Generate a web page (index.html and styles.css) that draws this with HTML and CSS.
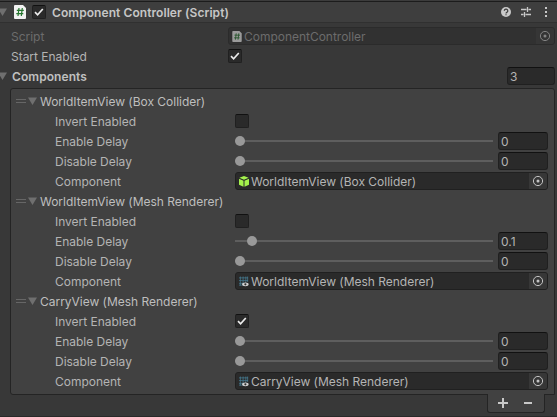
FILE: index.html
```
<!DOCTYPE html>
<html lang="en">
<head>
<meta charset="utf-8">
<title>Component Controller</title>
<link rel="stylesheet" href="styles.css">
</head>
<body>
<svg class="defs" width="0" height="0">
  <symbol id="tri" viewBox="0 0 9 8"><path d="M0 .5h9L4.5 8z" fill="#6f6f6f"/></symbol>
  <symbol id="check" viewBox="0 0 14 14"><path d="M3 7.2l2.6 2.6L10.8 4" fill="none" stroke="#ececec" stroke-width="1.7"/></symbol>
  <symbol id="script" viewBox="0 0 12 14"><path d="M1 0h8l3 3v10a1 1 0 0 1-1 1H1a1 1 0 0 1-1-1V1a1 1 0 0 1 1-1z" fill="#f2f2f2"/><path d="M5 3L4 11M8.3 3l-1 8M2.8 5.3h7M2.3 8.7h7" stroke="#26762f" stroke-width="1.2" fill="none"/></symbol>
  <symbol id="pick" viewBox="0 0 12 12"><circle cx="6" cy="6" r="4.6" fill="none" stroke="#c4c4c4"/><circle cx="6" cy="6" r="1.5" fill="#c4c4c4"/></symbol>
  <symbol id="cube" viewBox="0 0 10 11"><path d="M5 0l4.6 1.8L5 3.8.4 1.8zM0 2.7l4.5 2v6L0 8.7zM10 2.7l-4.500 2v6l4.500-2z" fill="#a4f24c"/></symbol>
  <symbol id="mesh" viewBox="0 0 11 11"><path d="M1.500 0v10M4.500 0v10M7.500 0v7M0 1.500h10M0 4.500h10M0 7.500h5M9.500 0v6M0 9.500h4" stroke="#477f96" stroke-width=".8" fill="none"/><ellipse cx="7" cy="8.600" rx="3.600" ry="2.100" fill="#d0d0d0"/><circle cx="7" cy="8.600" r="1.200" fill="#333"/></symbol>
</svg>
<main class="inspector">
  <header class="head">
    <svg class="tri"><use href="#tri"/></svg>
    <svg class="file"><use href="#script"/></svg>
    <span class="box"><svg><use href="#check"/></svg></span>
    <h1>Component Controller (Script)</h1>
    <svg class="tools" viewBox="0 0 48 12">
      <circle cx="6" cy="6" r="5" fill="#c8c8c8"/>
      <path d="M4.300 4.900a1.750 1.750 0 1 1 2.500 1.500q-.8.400-.8 1M6 8.200v1.100" fill="none" stroke="#3e3e3e" stroke-width="1.200"/>
      <path d="M21 3.500h5.500M28.500 3.500H31M21 8.500h2.500M25.500 8.500H31M27.500 1v5M24.500 6v5" fill="none" stroke="#c8c8c8" stroke-width="1.300"/>
      <path d="M45 1h2v2h-2zM45 5h2v2h-2zM45 9h2v2h-2z" fill="#c8c8c8"/>
    </svg>
  </header>
  <div class="row disabled">
    <span class="label">Script</span>
    <div class="object"><svg class="icon"><use href="#script"/></svg><span class="name">ComponentController</span><span class="picker"><svg><use href="#pick"/></svg></span></div>
  </div>
  <div class="row">
    <span class="label">Start Enabled</span>
    <span class="box"><svg><use href="#check"/></svg></span>
  </div>
  <div class="row fold">
    <svg class="tri"><use href="#tri"/></svg>
    <strong>Components</strong>
    <span class="num">3</span>
  </div>
  <section class="list">
    <div class="item"><i class="grip"></i><svg class="tri"><use href="#tri"/></svg><span class="title">WorldItemView (Box Collider)</span></div>
    <div class="row"><span class="label">Invert Enabled</span><span class="box"></span></div>
    <div class="row"><span class="label">Enable Delay</span><span class="slider"><i class="knob"></i></span><span class="num">0</span></div>
    <div class="row"><span class="label">Disable Delay</span><span class="slider"><i class="knob"></i></span><span class="num">0</span></div>
    <div class="row"><span class="label">Component</span><div class="object"><svg class="icon"><use href="#cube"/></svg><span class="name">WorldItemView (Box Collider)</span><span class="picker"><svg><use href="#pick"/></svg></span></div></div>

    <div class="item"><i class="grip"></i><svg class="tri"><use href="#tri"/></svg><span class="title">WorldItemView (Mesh Renderer)</span></div>
    <div class="row"><span class="label">Invert Enabled</span><span class="box"></span></div>
    <div class="row"><span class="label">Enable Delay</span><span class="slider"><i class="knob tenth"></i></span><span class="num">0.1</span></div>
    <div class="row"><span class="label">Disable Delay</span><span class="slider"><i class="knob"></i></span><span class="num">0</span></div>
    <div class="row"><span class="label">Component</span><div class="object"><svg class="icon"><use href="#mesh"/></svg><span class="name">WorldItemView (Mesh Renderer)</span><span class="picker"><svg><use href="#pick"/></svg></span></div></div>

    <div class="item"><i class="grip"></i><svg class="tri"><use href="#tri"/></svg><span class="title">CarryView (Mesh Renderer)</span></div>
    <div class="row"><span class="label">Invert Enabled</span><span class="box"><svg><use href="#check"/></svg></span></div>
    <div class="row"><span class="label">Enable Delay</span><span class="slider"><i class="knob"></i></span><span class="num">0</span></div>
    <div class="row"><span class="label">Disable Delay</span><span class="slider"><i class="knob"></i></span><span class="num">0</span></div>
    <div class="row"><span class="label">Component</span><div class="object"><svg class="icon"><use href="#mesh"/></svg><span class="name">CarryView (Mesh Renderer)</span><span class="picker"><svg><use href="#pick"/></svg></span></div></div>
  </section>
  <footer class="foot">
    <svg viewBox="0 0 10 10"><path d="M5 0v10M0 5h10" stroke="#c8c8c8" stroke-width="2"/></svg>
    <svg viewBox="0 0 10 10"><path d="M1 5h8" stroke="#c8c8c8" stroke-width="2"/></svg>
  </footer>
</main>
</body>
</html>
```
FILE: styles.css
```
* { box-sizing: border-box; }
body { margin: 0; background: #383838; color: #b4b4b4; font: 12px/20px Inter, sans-serif; letter-spacing: -.02px; overflow: hidden; }
svg { display: block; flex: none; }
.defs { position: absolute; }
.inspector { height: 417px; border-top: 1px solid #3c3c3c; border-bottom: 1px solid #292929; }
.head { display: flex; align-items: center; height: 22px; margin-bottom: 3px; background: #3e3e3e; border-top: 1px solid #1c1c1c; border-bottom: 1px solid #303030; }
.tri { width: 9px; height: 8px; }
.head .tri, .fold .tri { margin-left: -2px; }
.file { width: 12px; height: 14px; margin: 0 6px 0 7px; }
.head h1 { flex: 1; margin: 0 0 0 6px; padding-top: 2px; font-size: 12px; font-weight: 600; color: #c6c6c6; letter-spacing: .07px; }
.tools { width: 48px; height: 12px; margin-right: 9px; }
.box { width: 14px; height: 14px; flex: none; background: #2a2a2a; border: 1px solid #202020; border-top-color: #111; border-radius: 2px; }
.box svg { width: 14px; height: 14px; margin: -1px; }
.row { display: flex; align-items: center; height: 20px; padding: 0 2px 0 11px; white-space: nowrap; }
.label { width: 217px; flex: none; padding-top: 2px; }
.object { display: flex; align-items: center; flex: 1; height: 18px; padding-left: 3px; background: #2a2a2a; border: 1px solid #202020; border-radius: 3px; line-height: 16px; overflow: hidden; }
.icon { width: 10px; height: 11px; margin-right: 2px; }
.name { flex: 1; padding-top: 2px; }
.picker { display: flex; align-items: center; justify-content: center; width: 18px; height: 16px; background: #373737; }
.picker svg { width: 12px; height: 12px; }
.disabled .label, .disabled .name { color: #6c6c6c; }
.disabled .object { background: #313131; border-color: #2b2b2b; }
.disabled .picker { background: #363636; }
.disabled .icon, .disabled .picker svg { opacity: .55; }
.fold { padding-left: 0; }
.fold strong { flex: 1; margin-left: 5px; padding-top: 2px; font-weight: 600; color: #c0c0c0; letter-spacing: .07px; }
.num { width: 50px; height: 18px; flex: none; padding-left: 2px; line-height: 18px; background: #2a2a2a; border: 1px solid #202020; border-top-color: #111; border-radius: 3px; }
.fold .num { width: 48px; }
.list { height: 307px; margin: 2px 2px 0 10px; padding: 2px 6px 0 5px; background: #414141; border: 1px solid #242424; border-radius: 3px 3px 0 3px; }
.list .row { padding: 0 0 0 39px; }
.list .label { width: 180px; }
.item { display: flex; align-items: center; height: 20px; white-space: nowrap; }
.grip { width: 10px; height: 4px; margin-right: 2px; border: solid #666; border-width: 1px 0; }
.title { margin-left: 3px; padding-top: 2px; color: #bebebe; }
.slider { flex: 1; display: flex; align-items: center; height: 10px; margin-right: 5px; background: linear-gradient(#5e5e5e, #5e5e5e) 0 50% / 100% 2px no-repeat; }
.knob { width: 10px; height: 10px; border-radius: 50%; background: #999; }
.tenth { margin-left: 12px; }
.foot { display: flex; align-items: center; justify-content: space-between; width: 58px; height: 19px; margin: -1px 12px 0 auto; padding: 0 11px 1px 10px; background: #414141; border: 1px solid #242424; border-top: 0; border-radius: 0 0 3px 3px; }
.foot svg { width: 10px; height: 10px; }
```
